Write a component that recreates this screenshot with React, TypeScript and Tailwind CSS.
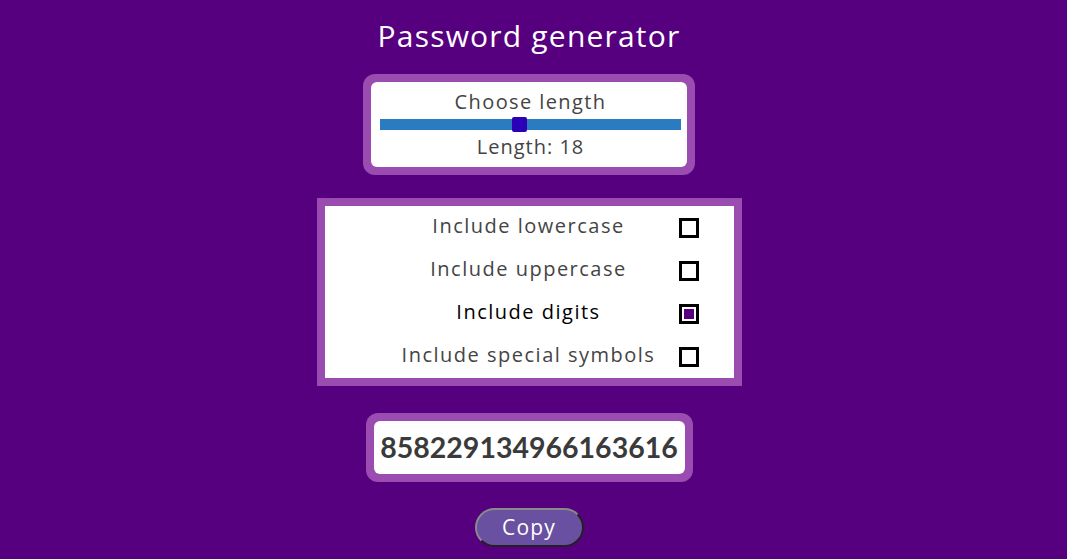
import { useState } from 'react';

const OPTIONS = [
  { key: 'lower', label: 'Include lowercase' },
  { key: 'upper', label: 'Include uppercase' },
  { key: 'digits', label: 'Include digits' },
  { key: 'symbols', label: 'Include special symbols' },
];

function Box({ checked }: { checked: boolean }) {
  return (
    <div className="w-[20px] h-[20px] border-[3px] border-black bg-white flex items-center justify-center">
      {checked && <div className="w-[10px] h-[10px] bg-[#57007f]" />}
    </div>
  );
}

export default function App() {
  const [checked, setChecked] = useState<Record<string, boolean>>({ digits: true });
  const length = 18;

  return (
    <div
      className="min-h-screen w-full bg-[#57007f] flex flex-col items-center pr-[9px]"
      style={{ fontFamily: '"Open Sans", "Noto Sans", sans-serif' }}
    >
      {/* Title */}
      <h1 className="mt-[15px] text-[30px] leading-[42px] tracking-[1.2px] text-white">Password generator</h1>

      {/* Length */}
      <div className="mt-[17px] w-[332px] rounded-[12px] bg-[#9a4cb1] p-[8px]">
        <div className="rounded-[6px] bg-white pl-[9px] pr-[6px] pt-[6px] pb-[6px] flex flex-col items-center text-[#444] tracking-[1.4px]">
          <span className="text-[20px] leading-[28px]">Choose length</span>
          <div className="relative w-full h-[11px] bg-[#2a7bc0] my-[3px]">
            <div className="absolute left-[132px] top-[-2px] w-[15px] h-[15px] rounded-[2px] bg-[#2b00b7]" />
          </div>
          <span className="text-[20px] leading-[28px] tracking-[1px]">Length: {length}</span>
        </div>
      </div>

      {/* Options */}
      <div className="mt-[23px] w-[425px] bg-[#9a4cb1] p-[8px]">
        <div className="bg-white pl-[59px]">
          {OPTIONS.map(({ key, label }) => (
            <label
              key={key}
              onClick={() => setChecked((p) => ({ ...p, [key]: !p[key] }))}
              className="grid grid-cols-[290px_20px] gap-[5px] items-center h-[43px] cursor-pointer"
            >
              <span
                className={`-mt-[3px] text-center text-[20px] tracking-[1.5px] ${checked[key] ? 'text-black' : 'text-[#444]'}`}
              >
                {label}
              </span>
              <Box checked={!!checked[key]} />
            </label>
          ))}
        </div>
      </div>

      {/* Result */}
      <div className="mt-[27px] w-[327px] rounded-[12px] bg-[#9a4cb1] p-[8px]">
        <div className="rounded-[6px] bg-white h-[53px] flex items-center justify-center">
          <span className="text-[28.5px] font-bold text-[#3a3a3a]" style={{ fontFamily: 'Lato, sans-serif' }}>
            858229134966163616
          </span>
        </div>
      </div>

      <button className="mt-[26px] w-[109px] h-[39px] rounded-full bg-[#6a50a0] text-white text-[21px] tracking-[1.2px] border-2 border-t-[#8a8a8a] border-l-[#8a8a8a] border-b-[#222] border-r-[#222]">
        Copy
      </button>
    </div>
  );
}
